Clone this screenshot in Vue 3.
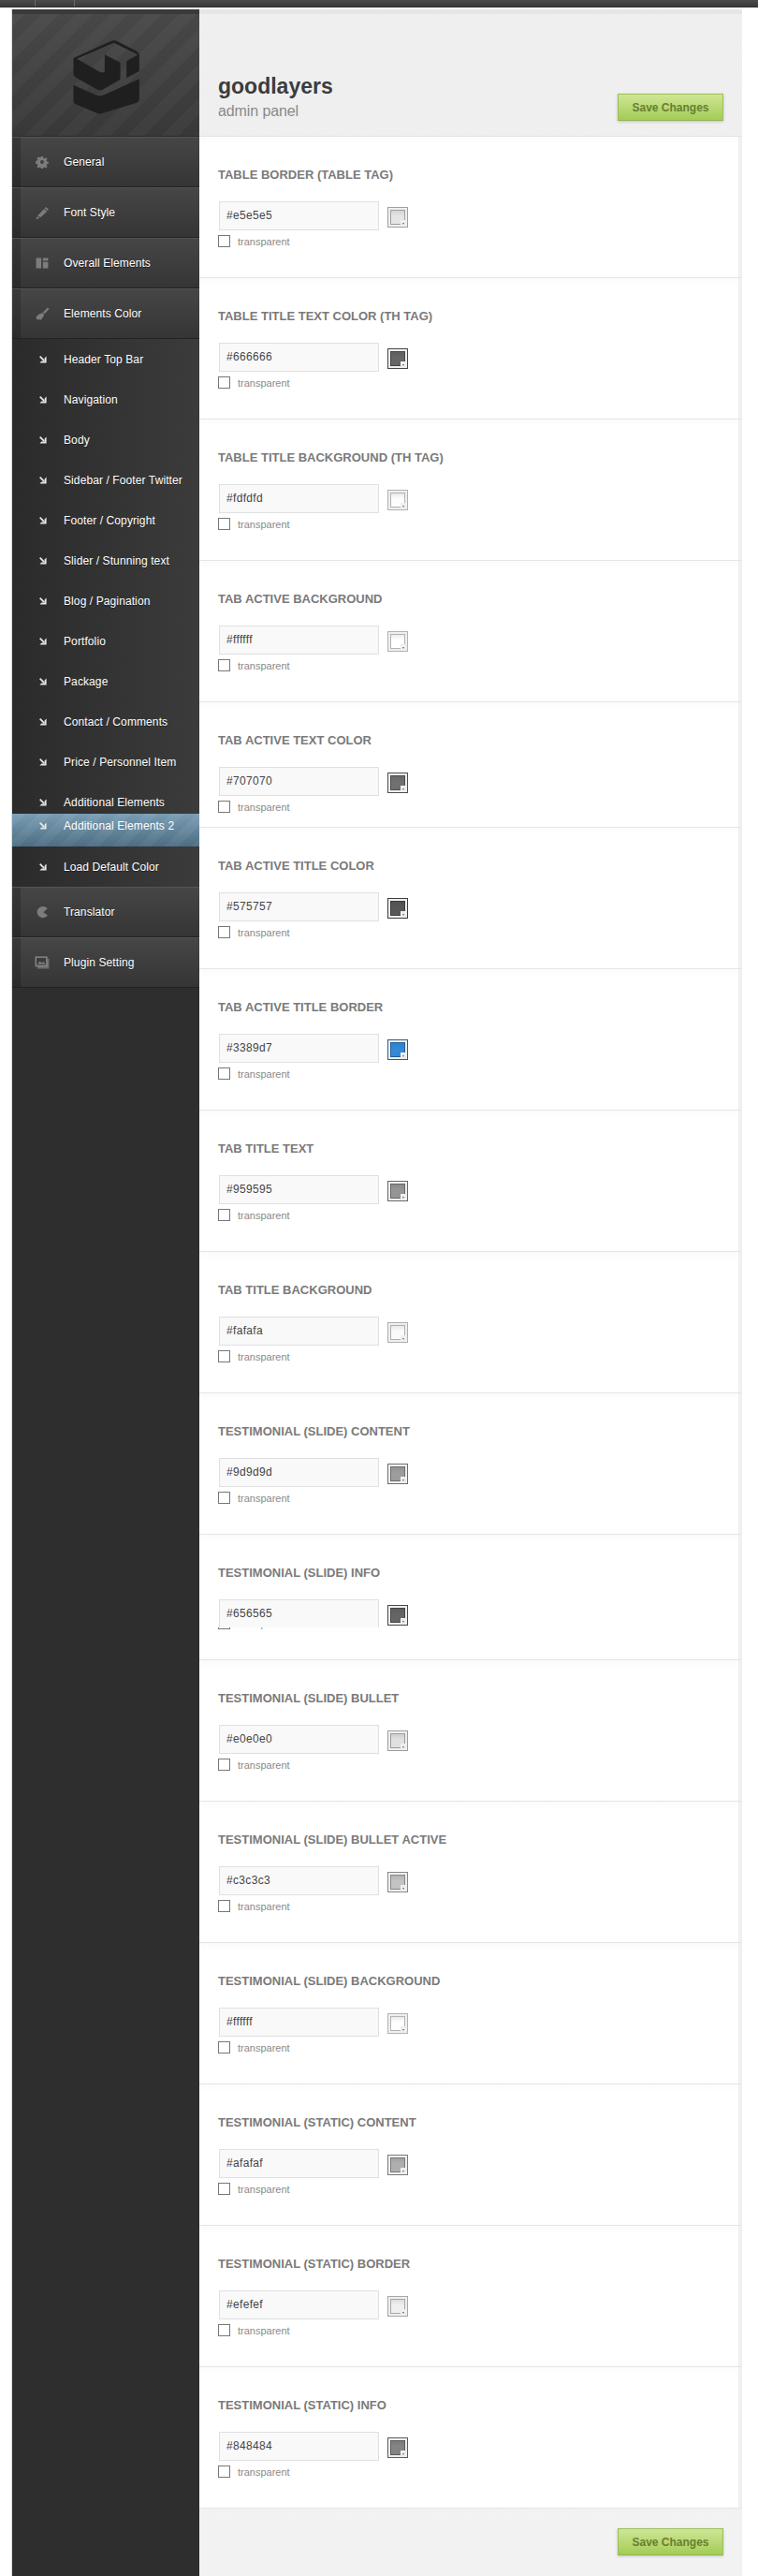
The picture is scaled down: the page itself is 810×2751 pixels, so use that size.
<template>
  <div class="page">
    <div class="topbar"><div class="topbar-tab"></div></div>
    <div class="panel">
      <aside class="sidebar">
        <div class="logo-box">
          <svg class="logo" viewBox="225 120 230 255" width="77" height="85">
            <path fill="#1f1f1f" d="M235 186 L355 132 Q365 128 375 132 L438 164 Q446 169 446 178 L446 228 L405 250 L405 196 L438 178 Q442 175 438 173 L368 139 Q365 137 360 139 L246 188 L320 231 Q328 234 335 230 L335 175 L385 200 L385 255 L328 287 Q320 291 312 287 L242 248 Q235 244 235 238 Z" />
            <path fill="#1f1f1f" d="M235 272 L305 304 Q320 310 335 303 L446 253 L446 318 Q446 326 438 329 L330 362 Q320 366 310 362 L242 334 Q235 331 235 324 Z" />
          </svg>
        </div>

        <nav>
          <div class="nav-item" v-for="item in topItems" :key="item.label">
            <span class="nav-icon" v-html="item.icon"></span>
            <span class="nav-label">{{ item.label }}</span>
          </div>

          <ul class="sub-list">
            <li
              v-for="sub in subItems"
              :key="sub.label"
              class="sub-item"
              :class="{ squeezed: sub.squeezed, active: sub.active }"
            >
              <svg class="sub-arrow" viewBox="0 0 8 8" width="8" height="8">
                <path fill="#e6e6e6" d="M7.600 0.400 V7.600 H0.400 L2.400 5.600 H5.600 V2.400 Z" />
                <path stroke="#e6e6e6" stroke-width="1.800" d="M0.700 0.700 L5.200 5.200" />
              </svg>
              <span class="sub-label">{{ sub.label }}</span>
            </li>
          </ul>

          <div class="nav-item" v-for="item in bottomItems" :key="item.label">
            <span class="nav-icon" v-html="item.icon"></span>
            <span class="nav-label">{{ item.label }}</span>
          </div>
        </nav>
      </aside>

      <main class="content">
        <header class="content-head">
          <div class="brand">
            <h1>goodlayers</h1>
            <p>admin panel</p>
          </div>
          <button class="save-btn">Save Changes</button>
        </header>

        <section
          v-for="opt in options"
          :key="opt.title"
          class="option"
          :class="{ short: opt.short, clipped: opt.clipped }"
        >
          <div class="option-inner">
            <h3 class="option-title">{{ opt.title }}</h3>
            <div class="color-row">
              <div class="color-value">{{ opt.color }}</div>
              <div class="swatch" :style="{ borderColor: darken(opt.color) }">
                <div class="swatch-fill" :style="{ backgroundColor: opt.color, borderColor: darken(opt.color) }"></div>
                <div class="swatch-notch"></div>
              </div>
            </div>
            <label class="transparent">
              <span class="checkbox"></span>
              <span>transparent</span>
            </label>
          </div>
        </section>

        <footer class="content-foot">
          <button class="save-btn">Save Changes</button>
        </footer>
      </main>
    </div>
  </div>
</template>

<script setup>
const gearIcon = `<svg viewBox="0 0 16 16" width="14" height="14"><path fill="#7c7c7c" fill-rule="evenodd" d="M6.800 1h2.400l.4 2 1.400.6 1.700-1.100 1.700 1.700-1.100 1.700.6 1.400 2 .4v2.400l-2 .4-.6 1.400 1.100 1.700-1.700 1.700-1.700-1.100-1.400.6-.4 2H6.800l-.4-2-1.400-.6-1.700 1.100-1.700-1.700 1.100-1.700-.6-1.400-2-.4V6.800l2-.4.6-1.400-1.100-1.700 1.700-1.700 1.700 1.100 1.400-.6zM8 5.800a2.200 2.200 0 1 0 0 4.400 2.200 2.200 0 0 0 0-4.400z"/></svg>`
const pencilIcon = `<svg viewBox="0 0 16 16" width="15" height="15"><path fill="#7c7c7c" d="M11.500 1 L15 3.600 L13.800 5.200 L10.300 2.600 Z M9.600 3.400 L13.100 6 L5.600 13 L2.300 10.800 Z M1.800 11.600 L4.800 13.600 L0.500 15.500 Z"/></svg>`
const layoutIcon = `<svg viewBox="0 0 16 14" width="14" height="12"><path fill="#7c7c7c" d="M0.500 0.500h6.500v13h-6.500z"/><path fill="#7c7c7c" d="M9 0.500h6.500v3.500h-6.500z"/><path fill="#7c7c7c" d="M9 5.500h6.500v8h-6.500z"/></svg>`
const brushIcon = `<svg viewBox="0 0 16 16" width="15" height="15"><path fill="#7c7c7c" d="M13.800 0.500 L15.500 2.200 L10.200 7.600 L8.400 5.800 Z M7.600 6.400 L9.800 8.600 L8.800 11 L5.800 14.800 L4.600 13.400 L3.800 15 L2.600 13.600 L1.400 14.400 L0.500 11.500 L3.500 8.200 Z"/></svg>`
const pacmanIcon = `<svg viewBox="0 0 16 16" width="14" height="14"><path fill="#7c7c7c" d="M14.600 3.800 A7 7 0 1 0 14.800 12 L9.500 8.200 Z"/></svg>`
const pluginIcon = `<svg viewBox="0 0 17 15" width="16" height="14"><path fill="#6c6c6c" d="M3 3h13.500v11.500h-13.500z"/><path fill="#8a8a8a" d="M0.500 0.500h14v11.500h-14z"/><path fill="#3c3c3c" d="M2 2h11v8.500h-11z"/><path fill="#7c7c7c" d="M3 9.500l3-3.500 2 2 2-1.500 2.500 3z"/></svg>`

const topItems = [
  { label: "General", icon: gearIcon },
  { label: "Font Style", icon: pencilIcon },
  { label: "Overall Elements", icon: layoutIcon },
  { label: "Elements Color", icon: brushIcon }
]

const bottomItems = [
  { label: "Translator", icon: pacmanIcon },
  { label: "Plugin Setting", icon: pluginIcon }
]

const subItems = [
  { label: "Header Top Bar" },
  { label: "Navigation" },
  { label: "Body" },
  { label: "Sidebar / Footer Twitter" },
  { label: "Footer / Copyright" },
  { label: "Slider / Stunning text" },
  { label: "Blog / Pagination" },
  { label: "Portfolio" },
  { label: "Package" },
  { label: "Contact / Comments" },
  { label: "Price / Personnel Item" },
  { label: "Additional Elements", squeezed: true },
  { label: "Additional Elements 2", active: true },
  { label: "Load Default Color" }
]

const options = [
  { title: "Table Border (Table Tag)", color: "#e5e5e5" },
  { title: "Table Title Text Color (TH Tag)", color: "#666666" },
  { title: "Table Title Background (TH Tag)", color: "#fdfdfd" },
  { title: "Tab Active Background", color: "#ffffff" },
  { title: "Tab Active Text Color", color: "#707070", short: true },
  { title: "Tab Active Title Color", color: "#575757" },
  { title: "Tab Active Title Border", color: "#3389d7" },
  { title: "Tab Title Text", color: "#959595" },
  { title: "Tab Title Background", color: "#fafafa" },
  { title: "Testimonial (Slide) Content", color: "#9d9d9d" },
  { title: "Testimonial (Slide) Info", color: "#656565", clipped: true },
  { title: "Testimonial (Slide) Bullet", color: "#e0e0e0" },
  { title: "Testimonial (Slide) Bullet Active", color: "#c3c3c3" },
  { title: "Testimonial (Slide) Background", color: "#ffffff" },
  { title: "Testimonial (Static) Content", color: "#afafaf" },
  { title: "Testimonial (Static) Border", color: "#efefef" },
  { title: "Testimonial (Static) Info", color: "#848484" }
]

// swatch outline is the picked colour, a bit darker
const darken = (hex) => {
  const n = parseInt(hex.slice(1), 16)
  const r = Math.round(((n >> 16) & 255) * 0.7)
  const g = Math.round(((n >> 8) & 255) * 0.7)
  const b = Math.round((n & 255) * 0.7)
  return `rgb(${r}, ${g}, ${b})`
}
</script>

<style>
html, body {
  margin: 0;
  background: #ffffff;
}
</style>

<style scoped>
.page {
  width: 810px;
  height: 2751px;
  overflow: hidden;
  font-family: "Liberation Sans", Arial, sans-serif;
  background: #ffffff;
}

.topbar {
  height: 7px;
  background: linear-gradient(#4c4c4c, #3a3a3a);
  box-shadow: 0 1px 0 #2e2e2e;
}
.topbar-tab {
  width: 41px;
  height: 7px;
  margin-left: 37px;
  border-left: 1px solid #6a6a6a;
  border-right: 1px solid #6a6a6a;
}

.panel {
  display: flex;
  margin: 3px 17px 0 13px;
  height: 2741px;
}

/* sidebar */
.sidebar {
  width: 200px;
  flex-shrink: 0;
  background: #2e2e2e;
  box-shadow: -1px 0 0 #dcdcdc;
}
.logo-box {
  height: 136px;
  box-sizing: border-box;
  display: flex;
  align-items: flex-start;
  justify-content: center;
  padding-top: 30px;
  background:
    linear-gradient(#3a3a3a, #3a3a3a) top / 100% 5px no-repeat,
    repeating-linear-gradient(135deg, rgba(255, 255, 255, 0.025) 0 13px, rgba(0, 0, 0, 0.025) 13px 26px),
    linear-gradient(#4a4a4a, #393939);
  border-bottom: 1px solid #2b2b2b;
}
.logo {
  display: block;
}

.nav-item {
  height: 54px;
  box-sizing: border-box;
  display: flex;
  align-items: center;
  position: relative;
  background:
    linear-gradient(rgba(0, 0, 0, 0.2), rgba(0, 0, 0, 0.2)) left / 9px 100% no-repeat,
    linear-gradient(#464646, #353535);
  border-top: 1px solid #545454;
  border-bottom: 1px solid #222222;
}
.nav-icon {
  width: 55px;
  display: flex;
  justify-content: center;
  padding-left: 9px;
  box-sizing: border-box;
  line-height: 0;
}
.nav-icon :deep(svg) {
  display: block;
}
.nav-label {
  color: #ffffff;
  font-size: 12px;
  letter-spacing: 0.1px;
  text-shadow: 0 1px 0 #222222;
}

.sub-list {
  list-style: none;
  margin: 0;
  padding: 0;
  background:
    linear-gradient(90deg, rgba(0, 0, 0, 0.12), rgba(255, 255, 255, 0.05)),
    repeating-linear-gradient(135deg, #2e2e2e 0 1px, #363636 1px 2.1213px);
}
.sub-item {
  height: 43px;
  display: flex;
  align-items: center;
  box-sizing: border-box;
  padding-top: 1px;
  color: #ffffff;
}
.sub-item.squeezed {
  height: 34px;
  align-items: flex-start;
  padding-top: 15px;
}
.sub-item.squeezed .sub-arrow {
  margin-top: 3px;
}
.sub-item.active {
  height: 35px;
  align-items: flex-start;
  padding-top: 6px;
  background:
    repeating-linear-gradient(135deg, rgba(255, 255, 255, 0.03) 0 10px, rgba(0, 0, 0, 0.02) 10px 20px),
    linear-gradient(#7c9fb6, #4e6f85);
}
.sub-item.active .sub-label {
  text-shadow: none;
}
.sub-item.active .sub-arrow {
  margin-top: 3px;
}
.sub-arrow {
  display: block;
  margin-left: 29px;
  margin-right: 18px;
  flex-shrink: 0;
}
.sub-label {
  font-size: 12px;
  line-height: 15px;
  letter-spacing: 0.1px;
  text-shadow: 0 1px 0 #222222;
}

/* content */
.content {
  width: 580px;
  flex-shrink: 0;
}
.content-head {
  height: 136px;
  box-sizing: border-box;
  display: flex;
  justify-content: space-between;
  align-items: flex-start;
  padding: 0 20px 0 20px;
  background:
    linear-gradient(rgba(0, 0, 0, 0.04), rgba(0, 0, 0, 0.04)) top / 100% 5px no-repeat,
    repeating-linear-gradient(135deg, #ececec 0 1px, #f5f5f5 1px 2.1213px);
  border-bottom: 1px solid #e2e2e2;
}
.brand {
  padding-top: 68px;
}
.brand h1 {
  margin: 0;
  font-size: 23px;
  line-height: 28px;
  font-weight: bold;
  color: #3c3c3c;
}
.brand p {
  margin: 0;
  font-size: 16px;
  line-height: 26px;
  letter-spacing: -0.1px;
  color: #8a8a8a;
}
.save-btn {
  display: block;
  width: 113px;
  height: 29px;
  margin-top: 90px;
  padding: 0;
  box-sizing: border-box;
  border: 1px solid #9cc05e;
  border-bottom-color: #8fb452;
  background: linear-gradient(#cfe695, #a3cc57);
  box-shadow: 0 1px 3px rgba(0, 0, 0, 0.2);
  font-family: inherit;
  font-size: 12px;
  font-weight: bold;
  color: #66802e;
}

.option {
  height: 151px;
  box-sizing: border-box;
  display: flex;
  border-bottom: 1px solid #e5e5e5;
  background: #ffffff;
}
.option.short,
.option.clipped {
  height: 134px;
}
.option-inner {
  flex: 1;
  box-sizing: border-box;
  padding: 33px 0 0 20px;
  border-right: 4px solid #f0f0f0;
  background: linear-gradient(#fbfbfb, #ffffff 8px);
}
.option-title {
  margin: 0 0 20px;
  font-size: 13px;
  line-height: 16px;
  font-weight: bold;
  text-transform: uppercase;
  color: #7a7a7a;
}
.color-row {
  display: flex;
  align-items: flex-start;
  padding-left: 1px;
}
.color-value {
  width: 171px;
  height: 31px;
  box-sizing: border-box;
  border: 1px solid #e0e0e0;
  background: #f9f9f9;
  padding-left: 7px;
  font-size: 12px;
  line-height: 29px;
  letter-spacing: 0.33px;
  color: #444444;
}
.swatch {
  position: relative;
  width: 22px;
  height: 22px;
  box-sizing: border-box;
  margin: 6px 0 0 9px;
  padding: 2px;
  border: 1px solid #aaaaaa;
  background: #efefef;
}
.swatch-fill {
  width: 16px;
  height: 16px;
  box-sizing: border-box;
  border: 1px solid #aaaaaa;
  background-image: linear-gradient(rgba(0, 0, 0, 0.08), rgba(255, 255, 255, 0) 40%);
}
.swatch-notch {
  position: absolute;
  right: 0;
  bottom: 0;
  width: 7px;
  height: 7px;
  background: #efefef;
}
.swatch-notch::after {
  content: "";
  position: absolute;
  left: 2px;
  top: 3px;
  border-left: 1.5px solid transparent;
  border-right: 1.5px solid transparent;
  border-top: 2px solid #666666;
}
.transparent {
  display: flex;
  align-items: center;
  gap: 8px;
  height: 13px;
  margin-top: 5px;
  font-size: 11px;
  color: #8a8a8a;
}
.checkbox {
  width: 13px;
  height: 13px;
  box-sizing: border-box;
  border: 1px solid #777777;
  background: #ffffff;
}

/* this one row overlaps its checkbox in the original */
.clipped .color-row {
  position: relative;
  z-index: 1;
  height: 30px;
  overflow: hidden;
  background: #ffffff;
}
.clipped .transparent {
  margin-top: -11px;
}

.content-foot {
  height: 72px;
  box-sizing: border-box;
  display: flex;
  justify-content: flex-end;
  padding-right: 20px;
  background: repeating-linear-gradient(135deg, #f0f0f0 0 1px, #f7f7f7 1px 2.1213px);
}
.content-foot .save-btn {
  margin-top: 21px;
}
</style>
